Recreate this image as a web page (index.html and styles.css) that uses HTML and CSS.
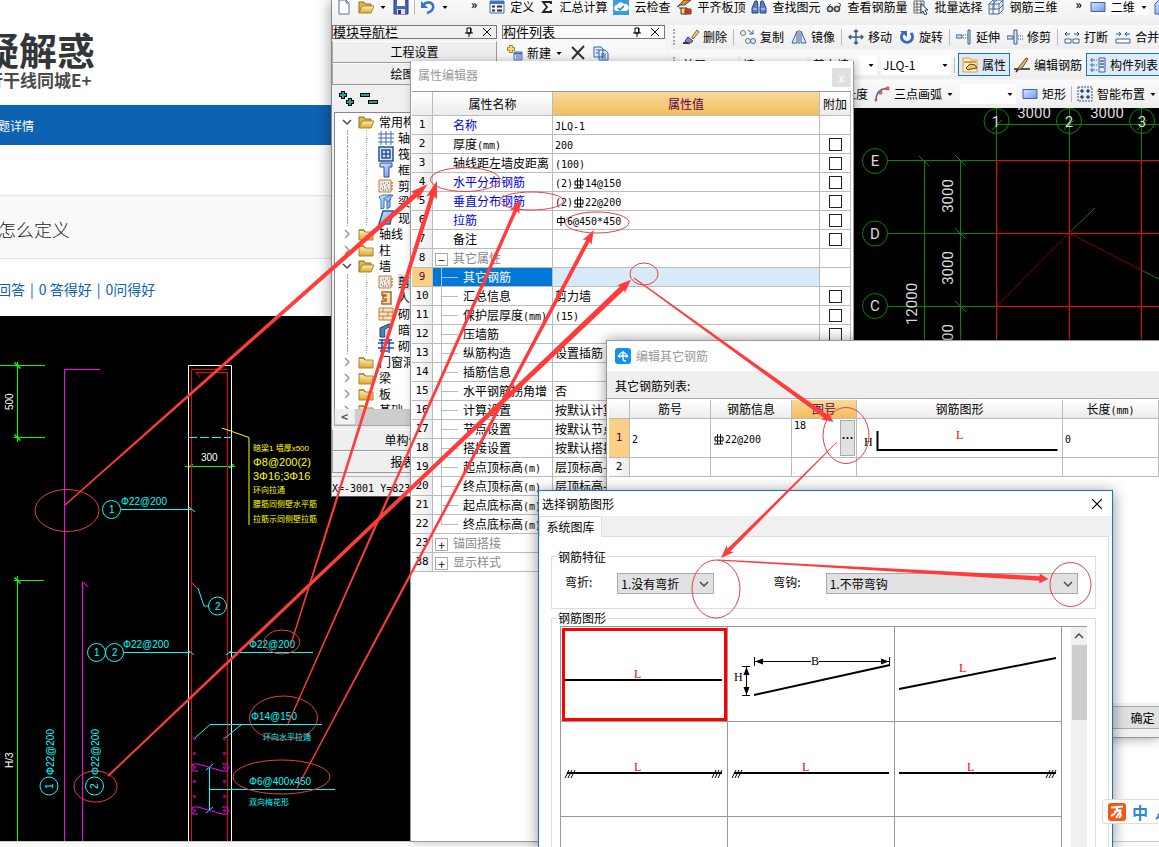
FILE: index.html
```html
<!DOCTYPE html>
<html lang="zh-CN">
<head>
<meta charset="utf-8">
<title>答疑解惑</title>
<link rel="stylesheet" href="styles.css">
</head>
<body>
<svg class="defs" aria-hidden="true">
  <defs>
    <linearGradient id="gold" x1="0" y1="0" x2="0" y2="1"><stop offset="0" stop-color="#fff3b8"/><stop offset="1" stop-color="#dba62b"/></linearGradient>
    <linearGradient id="blue" x1="0" y1="0" x2="1" y2="1"><stop offset="0" stop-color="#d6e6ff"/><stop offset="1" stop-color="#6f97ee"/></linearGradient>
    <symbol id="folder" viewBox="0 0 16 16"><path d="M1 4h5l1 2h8v8H1z" fill="url(#gold)" stroke="#a98632"/><path d="M1 4h5l1 2" fill="none" stroke="#8d6c1c"/></symbol>
    <symbol id="folder-open" viewBox="0 0 16 16"><path d="M1 3h5l1 2h6v3H4l-3 6z" fill="#e3b74a" stroke="#8d6c1c"/><path d="M4 7h12l-3 7H1z" fill="url(#gold)" stroke="#a98632"/></symbol>
    <symbol id="rect" viewBox="0 0 16 16"><path d="M1 3.500h14v9H1z" fill="url(#blue)" stroke="#3f63a8"/></symbol>
    <symbol id="down" viewBox="0 0 8 8"><path d="M1.500 3h5L4 6z" fill="#000"/></symbol>
    <symbol id="wall" viewBox="0 0 16 16"><path d="M1 2h12v12H1z" fill="#e9e5df" stroke="#c77b38"/><path d="M3 11h1M5 9h1M7 12h1M9 10h1M4 6h1M8 7h1M10 12h1M6 5h1M10 5h1M5 12h1" stroke="#555"/><path d="M13 5h2M13 8h2M13 11h2" stroke="#c77b38" stroke-width="1.500"/></symbol>
    <symbol id="chev" viewBox="0 0 10 10"><path d="M1 3l4 4 4-4" fill="none" stroke="#444" stroke-width="1.400"/></symbol>
    <symbol id="chev-r" viewBox="0 0 10 10"><path d="M3 1l4 4-4 4" fill="none" stroke="#999" stroke-width="1.500"/></symbol>
    <symbol id="pin" viewBox="0 0 10 10"><path d="M3 1h4v5H3zM1 6h8M5 6v4" fill="none" stroke="#000"/><path d="M6.500 1v5" stroke="#000"/></symbol>
    <symbol id="close" viewBox="0 0 10 10"><path d="M1 1l8 8M9 1L1 9" fill="none" stroke="#000"/></symbol>
  </defs>
</svg>

<main class="site">
  <header class="site-head">
    <h1 class="logo">疑解惑</h1>
    <p class="tagline">行干线同城E+</p>
  </header>
  <nav class="site-nav"><a href="#q">问题详情</a></nav>
  <section class="site-title"><h2>怎么定义</h2></section>
  <p class="stats"><a href="#a">回答</a><span>|</span><a href="#a">0 答得好</a><span>|</span><a href="#a">0问得好</a></p>
  <div class="cad">
    <svg width="411" height="525" viewBox="0 316 411 525" fill="none">
      <g stroke="#00ff00">
        <path d="M0 365.500h45M17.500 362v80M14 437.500h31M14 580.500h30M17.500 576v265M185 466.500h50"/>
        <path d="M14.500 362.500l6 6M14.500 434.500l6 6M14.500 577.500l6 6M188 468l5-4M229 468l5-4" stroke-width="1.500"/>
      </g>
      <path d="M64.500 841V369.500H100M82.500 841V582l6 5" stroke="#ff00ff"/>
      <path d="M188.500 841V365.500H231.500V841" stroke="#fff"/>
      <path d="M191.500 841V369.500H227M227.500 841V372.500H196l4 5" stroke="#ff0000"/>
      <path d="M188 437.500h44" stroke="#00ffff" stroke-dasharray="9 3"/>
      <path d="M222 428l27 9.500V525" stroke="#ffff00"/>
      <g stroke="#00ffff">
        <circle cx="111.500" cy="509.500" r="9"/><path d="M121 509.500h70M189 507l6 5"/>
        <circle cx="96.500" cy="652.500" r="9"/><circle cx="114.500" cy="652.500" r="9"/><path d="M124 652.500h66M188 650l6 5"/>
        <circle cx="217.500" cy="606" r="9"/><path d="M198 588l6 18h4"/>
        <path d="M229 652.500h84M226 655l6-5M195 738l15-13.500h112M225 738l16-13M210 789.500h125M209.500 767v44M206 770l7-6M206 813l7-6"/>
        <circle cx="49" cy="786" r="9"/><circle cx="94.500" cy="786" r="9"/>
      </g>
      <path d="M191 582l7 7" stroke="#ff00ff"/>
      <g stroke="#ff00ff">
        <circle cx="194.500" cy="738.500" r="1"/><circle cx="194.500" cy="753.500" r="1"/><circle cx="194.500" cy="767.500" r="1"/><circle cx="194.500" cy="781.500" r="1"/><circle cx="194.500" cy="796.500" r="1"/><circle cx="194.500" cy="810.500" r="1"/>
        <circle cx="224.500" cy="738.500" r="1"/><circle cx="224.500" cy="753.500" r="1"/><circle cx="224.500" cy="767.500" r="1"/><circle cx="224.500" cy="781.500" r="1"/><circle cx="224.500" cy="796.500" r="1"/><circle cx="224.500" cy="810.500" r="1"/>
        <path d="M198 771h-5q-3-3 0-7h5l24 7h5q3-3 0-7h-5M198 814h-5q-3-3 0-7h5l24 7h5q3-3 0-7h-5"/>
      </g>
      <g class="cad-white"><text class="num" x="201" y="461">300</text><text class="num" transform="translate(13 410) rotate(-90)">500</text><text class="num" transform="translate(13 768) rotate(-90)">H/3</text></g>
      <g class="cad-yellow">
        <text x="253" y="451">暗梁1 墙厚x500</text><text class="big" x="253" y="466">Φ8@200(2)</text><text class="big" x="253" y="480">3Φ16;3Φ16</text>
        <text x="253" y="493">环向拉通</text><text x="253" y="507">腰筋同侧壁水平筋</text><text x="253" y="522">拉筋示同侧壁拉筋</text>
      </g>
      <g class="cad-cyan">
        <text class="num" x="121" y="505">Φ22@200</text><text class="num" x="123" y="648">Φ22@200</text><text class="num" x="249" y="648">Φ22@200</text><text class="num" x="251" y="720">Φ14@150</text><text class="num" x="249" y="785">Φ6@400x450</text>
        <text x="263" y="740">环向水平拉通</text><text x="249" y="805">双向梅花形</text>
        <text class="num" transform="translate(54 775) rotate(-90)">Φ22@200</text><text class="num" transform="translate(99 775) rotate(-90)">Φ22@200</text>
        <text class="num" x="109" y="513">1</text><text class="num" x="94" y="656">1</text><text class="num" x="112" y="656">2</text><text class="num" x="215" y="610">2</text>
        <text class="num" transform="translate(53 789) rotate(-90)">1</text><text class="num" transform="translate(98 789) rotate(-90)">2</text>
      </g>
    </svg>
  </div>
</main>

<section class="app" aria-label="主程序">
  <div class="bar bar-top">
    <button class="tool" aria-label="新建文件"><svg class="ic" viewBox="0 0 16 16"><path d="M3 1h7l3 3v11H3z" fill="#fff" stroke="#5b6f96"/><path d="M10 1v3h3" fill="none" stroke="#5b6f96"/></svg></button>
    <button class="tool" aria-label="打开"><svg class="ic"><use href="#folder-open"/></svg><svg class="dn"><use href="#down"/></svg></button>
    <button class="tool" aria-label="保存"><svg class="ic" viewBox="0 0 16 16"><path d="M1 1h14v14H1z" fill="#4965bd" stroke="#293a80"/><path d="M4 1h8v6H4z" fill="#fff"/><path d="M4 10h8v5H4z" fill="#d8e1fa"/><path d="M5 11h3v4H5z" fill="#293a80"/></svg></button>
    <span class="sep"></span>
    <button class="tool" aria-label="撤销"><svg class="ic" viewBox="0 0 16 16"><path d="M3 6c5-5 11-2 10 3-.500 3-3 4-6 5" fill="none" stroke="#3973cc" stroke-width="2.500"/><path d="M1 2v7h7z" fill="#3973cc"/></svg><svg class="dn"><use href="#down"/></svg></button>
    <span class="more more-wide">»</span>
    <button class="tool"><svg class="ic" viewBox="0 0 16 16"><path d="M1 2h14v12H1z" fill="#eef3fb" stroke="#4571b5"/><path d="M1 3.500h14" stroke="#4571b5" stroke-width="3"/><path d="M3 7.500h3M3 11.500h3M8 7.500h5M8 11.500h5" stroke="#333" stroke-width="2"/></svg>定义</button>
    <button class="tool"><svg class="ic ic-narrow" viewBox="0 0 14 16"><path d="M11 5V3H3l4 5-4 5h8v-2" fill="none" stroke="#222" stroke-width="1.800"/></svg>汇总计算</button>
    <button class="tool"><svg class="ic" viewBox="0 0 16 16"><path d="M0 0h16v16H0z" fill="#3b9be0"/><path d="M4 12a3 3 0 010-6 4 4 0 017-1 3.500 3.500 0 012 7z" fill="#fff"/><path d="M5 9l2 2 4-4" fill="none" stroke="#267ac0" stroke-width="1.500"/></svg>云检查</button>
    <button class="tool"><svg class="ic" viewBox="0 0 16 16"><path d="M1 8l7-7h7L9 6H5z" fill="#c98e3d" stroke="#764713"/><path d="M3 9h8v6H5V9" fill="#ffd36b" stroke="#333"/><path d="M9 10h6v5H9zM9 12.500h6M12 10v5" fill="#d65a35" stroke="#8b2f16"/></svg>平齐板顶</button>
    <button class="tool"><svg class="ic" viewBox="0 0 16 16"><path d="M4 2h2l1 5v7H1V9zM10 2h2l3 7v5H9V7z" fill="#5a7fc2" stroke="#26447e"/><path d="M7 7h2M2 10h4M10 10h4" stroke="#dce8ff"/></svg>查找图元</button>
    <button class="tool"><svg class="ic" viewBox="0 0 16 16"><circle cx="4" cy="10" r="2.500" fill="#ddd" stroke="#444" stroke-width="1.500"/><circle cx="11" cy="10" r="2.500" fill="#ddd" stroke="#444" stroke-width="1.500"/><path d="M1 9l4-4M13.500 9l1-4-2-1M6 10h3" fill="none" stroke="#444"/></svg>查看钢筋量</button>
    <button class="tool"><svg class="ic" viewBox="0 0 16 16"><path d="M1 2h10v12H1zM1 5h10M1 8h10M1 11h10M4 2v12M8 2v12" fill="#fff" stroke="#666"/><path d="M8 5v9l2-2 2 4 2-1-2-4h3z" fill="#fff" stroke="#234878"/></svg>批量选择</button>
    <button class="tool"><svg class="ic" viewBox="0 0 16 16"><path d="M1 5l4-4h10v10l-4 4H1zM1 5h10v10M11 5l4-4M6 1v10M1 10h10l4-4M5 15V5l4-4" fill="none" stroke="#416aa5"/></svg>钢筋三维</button>
    <span class="more">»</span>
    <button class="tool tool-white"><svg class="ic"><use href="#rect"/></svg>二维<svg class="dn"><use href="#down"/></svg></button>
    <button class="tool" aria-label="视图"><svg class="ic" viewBox="0 0 16 16"><path d="M1 5l4-4h10v10l-4 4H1z" fill="url(#blue)" stroke="#416aa5"/></svg></button>
  </div>

  <div class="app-body">
    <aside class="nav-panel">
      <div class="panel-head"><span>模块导航栏</span><svg class="mini"><use href="#pin"/></svg><svg class="mini"><use href="#close"/></svg></div>
      <button class="nav-btn">工程设置</button>
      <button class="nav-btn">绘图输入</button>
      <div class="tree-tools">
        <svg width="40" height="16" viewBox="0 0 40 16"><path d="M5 0v8M1 4h8M12 7v8M8 11h8M22 4h10M30 11h10" fill="none" stroke="#000" stroke-width="4"/><path d="M5 1v6M2 4h6M12 8v6M9 11h6M23 4h8M31 11h8" fill="none" stroke="#20a39a" stroke-width="2"/></svg>
      </div>
      <ul class="tree">
        <li class="t1"><svg class="chev"><use href="#chev"/></svg><svg class="ic"><use href="#folder-open"/></svg>常用构件类型</li>
        <li class="t2"><svg class="ic" viewBox="0 0 16 16"><path d="M3 1v14M8 1v14M13 1v14M0 4h16M0 8h16M0 12h16" stroke="#3869b3" fill="none"/></svg>轴网</li>
        <li class="t2"><svg class="ic" viewBox="0 0 16 16"><path d="M1 1h14v14H1zM4 4h8v8H4zM8 4v8M4 8h8" fill="#d7e5fa" stroke="#264f95" stroke-width="1.500"/></svg>筏板基础</li>
        <li class="t2"><svg class="ic" viewBox="0 0 16 16"><path d="M2 1h12v4h-3v10H6V5H2z" fill="url(#blue)" stroke="#264f95"/></svg>框柱</li>
        <li class="t2"><svg class="ic"><use href="#wall"/></svg>剪力墙</li>
        <li class="t2"><svg class="ic" viewBox="0 0 16 16"><path d="M1 3l4-2h10l-3 4v8l-3 2V6H6v8l-3 1V6z" fill="url(#blue)" stroke="#3674ae"/><path d="M5 5l8-4M9 9l4-4" stroke="#3674ae"/></svg>梁</li>
        <li class="t2"><svg class="ic" viewBox="0 0 16 16"><path d="M5 1h10l-3 13H1z" fill="url(#blue)" stroke="#1e5da8" stroke-width="1.500"/></svg>现浇板</li>
        <li class="t1"><svg class="chev"><use href="#chev-r"/></svg><svg class="ic"><use href="#folder"/></svg>轴线</li>
        <li class="t1"><svg class="chev"><use href="#chev-r"/></svg><svg class="ic"><use href="#folder"/></svg>柱</li>
        <li class="t1"><svg class="chev"><use href="#chev"/></svg><svg class="ic"><use href="#folder-open"/></svg>墙</li>
        <li class="t2 picked"><svg class="ic"><use href="#wall"/></svg><span>剪力墙</span></li>
        <li class="t2"><svg class="ic" viewBox="0 0 16 16"><path d="M4 2h9v12H4v-3h4V9H5V6h3V5H4z" fill="#f7dfb8" stroke="#b46424" stroke-width="1.500"/></svg>人防门框墙</li>
        <li class="t2"><svg class="ic" viewBox="0 0 16 16"><path d="M1 2h14v12H1zM1 6h14M1 10h14M5 2v4M10 6v4M5 10v4" fill="#f9e4c8" stroke="#c77b38"/></svg>砌体墙</li>
        <li class="t2"><svg class="ic" viewBox="0 0 16 16"><path d="M2 6l9-4 4 1-8 4v8H2z" fill="#4e7fbc" stroke="#173e73"/><path d="M7 8l6-2v7l-6 2z" fill="#c9daf2"/></svg>暗梁</li>
        <li class="t2"><svg class="ic" viewBox="0 0 16 16"><path d="M0 5h16M0 10h16M4 1v14M11 1v14M1 2h13M2 13h8M7 5v5" fill="none" stroke="#2445a8" stroke-width="1.500"/></svg>砌体加筋</li>
        <li class="t1"><svg class="chev"><use href="#chev-r"/></svg><svg class="ic"><use href="#folder"/></svg>门窗洞</li>
        <li class="t1"><svg class="chev"><use href="#chev-r"/></svg><svg class="ic"><use href="#folder"/></svg>梁</li>
        <li class="t1"><svg class="chev"><use href="#chev-r"/></svg><svg class="ic"><use href="#folder"/></svg>板</li>
        <li class="t1"><svg class="chev"><use href="#chev-r"/></svg><svg class="ic"><use href="#folder"/></svg>基础</li>
      </ul>
      <div class="h-scroll"><span>&lt;</span></div>
      <button class="nav-btn">单构件输入</button>
      <button class="nav-btn">报表预览</button>
    </aside>

    <aside class="list-panel">
      <div class="panel-head"><span>构件列表</span><svg class="mini"><use href="#pin"/></svg><svg class="mini"><use href="#close"/></svg></div>
      <div class="list-tools">
        <button class="tool"><svg class="ic" viewBox="0 0 16 16"><path d="M7 7h8v8H7z" fill="#dce9fb" stroke="#426eae"/><path d="M7 8.500h8" stroke="#426eae" stroke-width="2"/><path d="M9 11h5M9 13h5" stroke="#426eae"/><path d="M4 0v8M0 4h8" stroke="#9d7818" stroke-width="3.500"/><path d="M4 1v6M1 4h6" stroke="#ffe05b" stroke-width="2"/></svg>新建<svg class="dn"><use href="#down"/></svg></button>
        <button class="tool" aria-label="删除"><svg class="ic" viewBox="0 0 16 16"><path d="M2 2l12 12M14 1L2 14" stroke="#333" stroke-width="2"/></svg></button>
        <button class="tool" aria-label="复制"><svg class="ic" viewBox="0 0 16 16"><path d="M1 2h7l2 2v8H1zM6 5h6l3 3v7H6z" fill="#e4efff" stroke="#2a62b8"/><path d="M3 5h3M3 8h3M8 9h5M8 11h5M8 13h5" stroke="#2a62b8"/></svg></button>
      </div>
    </aside>

    <div class="work">
      <div class="bar bar-edit">
        <span class="grip"></span>
        <button class="tool"><svg class="ic" viewBox="0 0 16 16"><path d="M9 8l5-7 2 2-6 7z" fill="#f0d487" stroke="#80602a"/><path d="M5 8l5 4-4 3-4-3z" fill="#7099d6" stroke="#243e74"/><path d="M0 14h6" stroke="#333" stroke-width="2"/><path d="M5 12l2 1" stroke="#e8448a" stroke-width="2"/></svg>删除</button>
        <span class="sep"></span>
        <button class="tool"><svg class="ic" viewBox="0 0 16 16"><circle cx="3" cy="4" r="2.500" fill="#eee" stroke="#777"/><circle cx="8" cy="12" r="2.500" fill="#eee" stroke="#777"/><circle cx="13" cy="12" r="2.500" fill="#dce9fb" stroke="#3a68ad"/><path d="M8 1l5 4M13 1v4H9" fill="none" stroke="#3a68ad"/></svg>复制</button>
        <button class="tool"><svg class="ic" viewBox="0 0 16 16"><path d="M6 2v12H1zM10 2v12h5z" fill="#e3ecfa" stroke="#2d5eaa"/><path d="M8 1v14" stroke="#555"/></svg>镜像</button>
        <span class="sep"></span>
        <button class="tool"><svg class="ic" viewBox="0 0 16 16"><path d="M8 1v14M1 8h14M6 3l2-2 2 2M6 13l2 2 2-2M3 6L1 8l2 2M13 6l2 2-2 2" fill="none" stroke="#3c6086" stroke-width="1.500"/></svg>移动</button>
        <button class="tool"><svg class="ic" viewBox="0 0 16 16"><path d="M4 4a5.500 5.500 0 108 0" fill="none" stroke="#3869c7" stroke-width="3"/><path d="M1 2h7v6z" fill="#3869c7"/></svg>旋转</button>
        <span class="sep"></span>
        <button class="tool"><svg class="ic" viewBox="0 0 16 16"><path d="M0 6h6v3H0zM12 1h2v14h-2z" fill="#dce9fb" stroke="#2d5c92"/><path d="M7 6h5M7 9h5" stroke="#2d5c92" stroke-dasharray="1 1"/></svg>延伸</button>
        <button class="tool"><svg class="ic" viewBox="0 0 16 16"><path d="M0 7h6v3H0zM7 1h3v14H7z" fill="#dce9fb" stroke="#2d5c92"/><path d="M11 7h5M11 10h5" stroke="#2d5c92" stroke-dasharray="1 1"/></svg>修剪</button>
        <span class="sep"></span>
        <button class="tool"><svg class="ic" viewBox="0 0 16 16"><path d="M1 10h6v4H1zM9 10h6v4H9z" fill="#fff" stroke="#3d6294"/><path d="M1 5h5M3 3L1 5l2 2M15 5h-5M13 3l2 2-2 2" fill="none" stroke="#1b56b8"/></svg>打断</button>
        <button class="tool"><svg class="ic" viewBox="0 0 16 16"><path d="M1 10h14v4H1z" fill="#fff" stroke="#3d6294"/><path d="M1 5h5M4 3l2 2-2 2M15 5h-5M12 3l-2 2 2 2" fill="none" stroke="#1b56b8"/></svg>合并</button>
      </div>
      <div class="bar bar-pick">
        <span class="grip"></span>
        <label class="combo w-57"><select aria-label="楼层"><option>首层</option></select><svg class="dn"><use href="#down"/></svg></label>
        <label class="combo w-66"><select aria-label="类型"><option>墙</option></select><svg class="dn"><use href="#down"/></svg></label>
        <label class="combo w-66"><select aria-label="构件类型"><option>剪力墙</option></select><svg class="dn"><use href="#down"/></svg></label>
        <label class="combo w-70"><select aria-label="构件"><option>JLQ-1</option></select><svg class="dn"><use href="#down"/></svg></label>
        <span class="sep"></span>
        <button class="tool active"><svg class="ic" viewBox="0 0 16 16"><path d="M1 1h7l1 2h6v12H1z" fill="#fff2cf" stroke="#e79933"/><path d="M2 5h12" stroke="#e79933" stroke-width="2"/><path d="M4 11l4-4 5 1 2 3-6 1-3 1z" fill="#f5c469" stroke="#544020"/></svg>属性</button>
        <button class="tool"><svg class="ic" viewBox="0 0 16 16"><path d="M0 12h16M2 15l4-5" stroke="#222" stroke-width="1.500"/><path d="M5 10l7-9 2 1-6 9-4 2z" fill="#e6bd76" stroke="#684720"/></svg>编辑钢筋</button>
        <button class="tool active"><svg class="ic" viewBox="0 0 16 16"><path d="M1 2h2v2H1zM1 7h2v2H1zM1 12h2v2H1z" fill="#fff" stroke="#456c9b"/><path d="M4 3h3M4 8h3M4 13h3" stroke="#456c9b" stroke-dasharray="1 1"/><path d="M9 1h6v14H9z" fill="#e4edfb" stroke="#35639d"/><path d="M10 4h4M10 7h4M10 10h4" stroke="#35639d" stroke-width="1.500"/></svg>构件列表</button>
      </div>
      <div class="bar bar-draw">
        <span class="tool">点加长度</span>
        <button class="tool"><svg class="ic" viewBox="0 0 16 16"><path d="M2 14C2 6 7 2 14 3" fill="none" stroke="#376cad" stroke-width="1.500"/><path d="M1 13h2v2H1zM5 5h3v3H5zM12 1h3v3h-3z" fill="#f06a4d" stroke="#b33" stroke-width=".5"/></svg>三点画弧<svg class="dn"><use href="#down"/></svg></button>
        <label class="combo w-56"><select aria-label="绘制方式"><option></option></select><svg class="dn"><use href="#down"/></svg></label>
        <button class="tool"><svg class="ic"><use href="#rect"/></svg>矩形</button>
        <span class="sep"></span>
        <button class="tool"><svg class="ic" viewBox="0 0 16 16"><path d="M1 1h14v14H1z" fill="#e5eefb" stroke="#31577f" stroke-dasharray="2 1"/><path d="M5 3v4M3 5h4M11 3v4M9 5h4M5 9v4M3 11h4M11 9v4M9 11h4" stroke="#111"/></svg>智能布置<svg class="dn"><use href="#down"/></svg></button>
      </div>
      <div class="canvas">
        <svg width="305" height="370" viewBox="854 108 305 370" fill="none">
          <g stroke="#008a00">
            <path d="M997 124.500h162M996.500 108v53M1069.500 108v53M1141.500 108v53M888 160.500h109M888 233.500h109M888 306.500h109M924.500 160v318M960.500 160v318"/>
            <path d="M919 156l10 10M955 155l11 11M955 228l11 11M955 301l11 11M992 130l10-10M1064 130l10-10M1137 130l10-10M1069 233l26-25M1141 270l18 9"/>
            <circle cx="996.500" cy="121" r="12.500"/><circle cx="1069" cy="121" r="12.500"/><circle cx="1142" cy="121" r="12.500"/>
            <circle cx="875" cy="161" r="12.500"/><circle cx="875" cy="233.500" r="12.500"/><circle cx="875" cy="306" r="12.500"/>
          </g>
          <path d="M996.500 160v318M1069.500 160v318M1141.500 160v318M996 160.500h163M996 233.500h163M996 306.500h163" stroke="#ff0000"/>
          <path d="M997 306l72-73 72 37" stroke="#c00000" stroke-dasharray="2 1"/>
          <g class="axis">
            <text x="1034" y="118">3000</text><text x="1107" y="118">3000</text>
            <text x="996" y="127">1</text><text x="1069" y="127">2</text><text x="1142" y="127">3</text>
            <text x="875" y="166">E</text><text x="875" y="239">D</text><text x="875" y="311">C</text>
            <text transform="translate(953 196) rotate(-90)">3000</text><text transform="translate(953 268) rotate(-90)">3000</text><text transform="translate(953 341) rotate(-90)">3000</text>
            <text transform="translate(917 304) rotate(-90)">12000</text>
          </g>
        </svg>
      </div>
    </div>
  </div>
  <div class="status"><span>X=-3001 Y=8231</span></div>
</section>

<section class="win props" aria-label="属性编辑器">
  <header class="win-head"><span>属性编辑器</span><button class="gray-x" aria-label="关闭">x</button></header>
  <table class="grid prop-grid">
    <colgroup><col class="c-num"><col class="c-name"><col><col class="c-add"></colgroup>
    <thead><tr><th></th><th>属性名称</th><th class="hot">属性值</th><th>附加</th></tr></thead>
    <tbody>
      <tr><th>1</th><td class="top link">名称</td><td><span class="lat">JLQ-1</span></td><td></td></tr>
      <tr><th>2</th><td class="top">厚度<span class="lat">(mm)</span></td><td><span class="lat">200</span></td><td><input type="checkbox" aria-label="厚度附加"></td></tr>
      <tr><th>3</th><td class="top">轴线距左墙皮距离</td><td><span class="lat">(100)</span></td><td><input type="checkbox" aria-label="距离附加"></td></tr>
      <tr><th>4</th><td class="top link">水平分布钢筋</td><td><span class="lat">(2)</span><svg class="bar-sym" viewBox="0 0 12 12"><path d="M2 4h8v4H2zM4.500 1v10M7.500 1v10M1 11h9" fill="none" stroke="#000"/></svg><span class="lat">14@150</span></td><td><input type="checkbox" aria-label="水平筋附加"></td></tr>
      <tr><th>5</th><td class="top link">垂直分布钢筋</td><td><span class="lat">(2)</span><svg class="bar-sym" viewBox="0 0 12 12"><path d="M2 4h8v4H2zM4.500 1v10M7.500 1v10M1 11h9" fill="none" stroke="#000"/></svg><span class="lat">22@200</span></td><td><input type="checkbox" aria-label="垂直筋附加"></td></tr>
      <tr><th>6</th><td class="top link">拉筋</td><td><svg class="bar-sym" viewBox="0 0 12 12"><path d="M2.500 3.500h7v4h-7zM6 1v10" fill="none" stroke="#000"/></svg><span class="lat">6@450*450</span></td><td><input type="checkbox" aria-label="拉筋附加"></td></tr>
      <tr><th>7</th><td class="top">备注</td><td></td><td><input type="checkbox" aria-label="备注附加"></td></tr>
      <tr><th>8</th><td class="group"><button class="box" aria-label="收起">−</button>其它属性</td><td></td><td></td></tr>
      <tr class="current"><th>9</th><td class="sub">其它钢筋</td><td></td><td></td></tr>
      <tr><th>10</th><td class="sub">汇总信息</td><td>剪力墙</td><td><input type="checkbox" aria-label="汇总附加"></td></tr>
      <tr><th>11</th><td class="sub">保护层厚度<span class="lat">(mm)</span></td><td><span class="lat">(15)</span></td><td><input type="checkbox" aria-label="保护层附加"></td></tr>
      <tr><th>12</th><td class="sub">压墙筋</td><td></td><td><input type="checkbox" aria-label="压墙筋附加"></td></tr>
      <tr><th>13</th><td class="sub">纵筋构造</td><td>设置插筋</td><td></td></tr>
      <tr><th>14</th><td class="sub">插筋信息</td><td></td><td></td></tr>
      <tr><th>15</th><td class="sub">水平钢筋拐角增</td><td>否</td><td></td></tr>
      <tr><th>16</th><td class="sub">计算设置</td><td>按默认计算设置</td><td></td></tr>
      <tr><th>17</th><td class="sub">节点设置</td><td>按默认节点设置</td><td></td></tr>
      <tr><th>18</th><td class="sub">搭接设置</td><td>按默认搭接设置</td><td></td></tr>
      <tr><th>19</th><td class="sub">起点顶标高<span class="lat">(m)</span></td><td>层顶标高-</td><td></td></tr>
      <tr><th>20</th><td class="sub">终点顶标高<span class="lat">(m)</span></td><td>层顶标高-</td><td></td></tr>
      <tr><th>21</th><td class="sub">起点底标高<span class="lat">(m)</span></td><td>层底标高</td><td></td></tr>
      <tr><th>22</th><td class="sub last">终点底标高<span class="lat">(m)</span></td><td>层底标高</td><td></td></tr>
      <tr><th>23</th><td class="group"><button class="box" aria-label="展开">+</button>锚固搭接</td><td></td><td></td></tr>
      <tr><th>38</th><td class="group"><button class="box" aria-label="展开">+</button>显示样式</td><td></td><td></td></tr>
    </tbody>
  </table>
</section>

<section class="win rebar" aria-label="编辑其它钢筋">
  <header class="win-head"><svg class="ic" viewBox="0 0 16 16"><rect width="16" height="16" rx="3" fill="#1590ee"/><path d="M8 3v8q0 2 3 2M5 6q3-3 6 0M3 8h10M3 8l2-1.500M3 8l2 1.500M13 8l-2-1.500M13 8l-2 1.500" fill="none" stroke="#fff" stroke-width="1.300"/></svg><span>编辑其它钢筋</span></header>
  <p class="caption">其它钢筋列表:</p>
  <table class="grid rebar-grid">
    <colgroup><col class="c-num"><col class="c-81"><col class="c-81"><col class="c-65"><col class="c-206"><col></colgroup>
    <thead><tr><th></th><th>筋号</th><th>钢筋信息</th><th class="hot">图号</th><th>钢筋图形</th><th>长度<span class="lat">(mm)</span></th></tr></thead>
    <tbody>
      <tr class="tall"><th class="on">1</th><td><span class="lat">2</span></td><td><svg class="bar-sym" viewBox="0 0 12 12"><path d="M2 4h8v4H2zM4.500 1v10M7.500 1v10M1 11h9" fill="none" stroke="#000"/></svg><span class="lat">22@200</span></td><td><div class="pick"><span class="lat">18</span><button aria-label="选择图形">…</button></div></td><td><svg class="shape-row" width="202" height="36" viewBox="860 420 202 36"><path d="M878.500 431v19h180" fill="none" stroke="#000" stroke-width="2"/><text x="865" y="446">H</text><text class="red" x="957" y="439">L</text></svg></td><td><span class="lat">0</span></td></tr>
      <tr><th>2</th><td></td><td></td><td></td><td></td><td></td></tr>
    </tbody>
  </table>
  <footer><button>确定</button></footer>
</section>

<section class="win chooser" aria-label="选择钢筋图形">
  <header class="win-head"><span>选择钢筋图形</span><button class="x" aria-label="关闭"><svg width="12" height="12" viewBox="0 0 10 10"><use href="#close"/></svg></button></header>
  <div class="tabs"><button class="tab">系统图库</button></div>
  <div class="tab-page">
    <fieldset class="features">
      <legend>钢筋特征</legend>
      <label for="bend">弯折:</label>
      <div class="drop drop-bend"><select id="bend"><option>1.没有弯折</option></select><svg class="chev"><use href="#chev"/></svg></div>
      <label for="hook">弯钩:</label>
      <div class="drop drop-hook"><select id="hook"><option>1.不带弯钩</option></select><svg class="chev"><use href="#chev"/></svg></div>
    </fieldset>
    <fieldset class="shapes">
      <legend>钢筋图形</legend>
      <div class="gallery">
        <div class="cells">
          <button class="cell selected"><svg viewBox="0 0 166 94"><path d="M4 53h157" stroke="#000" stroke-width="2"/><text class="red" x="73" y="51">L</text></svg></button>
          <button class="cell"><svg viewBox="0 0 166 94"><path d="M26 68l136-30" stroke="#000" stroke-width="2"/><path d="M26.500 30v9M161.500 30v9M27 34.500h56M91 34.500h71M18.500 39v29M14 39.500h8M14 68.500h8" stroke="#000"/><path d="M27 34.500l8-3v6zM161 34.500l-8-3v6zM18.500 40l-3 8h6zM18.500 68l-3-8h6z" fill="#000"/><text x="83" y="38">B</text><text x="6" y="54">H</text></svg></button>
          <button class="cell"><svg viewBox="0 0 166 94"><path d="M4 62l157-31" stroke="#000" stroke-width="2"/><text class="red" x="64" y="45">L</text></svg></button>
          <button class="cell"><svg viewBox="0 0 166 94"><path d="M6 51h155" stroke="#000" stroke-width="2"/><path d="M4 56l4-8M7 56l4-8M10 56l4-8M151 56l4-8M154 56l4-8M157 56l4-8" stroke="#000"/><text class="red" x="73" y="49">L</text></svg></button>
          <button class="cell"><svg viewBox="0 0 166 94"><path d="M6 51h155" stroke="#000" stroke-width="2"/><path d="M4 56l4-8M7 56l4-8M10 56l4-8" stroke="#000"/><text class="red" x="74" y="49">L</text></svg></button>
          <button class="cell"><svg viewBox="0 0 166 94"><path d="M4 51h157" stroke="#000" stroke-width="2"/><path d="M151 56l4-8M154 56l4-8M157 56l4-8" stroke="#000"/><text class="red" x="72" y="49">L</text></svg></button>
          <button class="cell" aria-label="图形7"></button><button class="cell" aria-label="图形8"></button><button class="cell" aria-label="图形9"></button>
        </div>
        <div class="v-scroll"><svg class="chev up"><use href="#chev"/></svg><span class="thumb"></span></div>
      </div>
    </fieldset>
  </div>
</section>

<div class="ime"><svg width="18" height="20" viewBox="0 0 18 20"><rect y="1" width="18" height="18" rx="3" fill="#fa5514"/><path d="M3 5.500l12-1M9 6c0 4-2 6-6 8M6 10l6-2c1 0 1 1 0 2l-4 6M12 11c2 2 0 4-1 5" fill="none" stroke="#fff" stroke-width="2"/></svg><span>中</span><svg width="6" height="20" viewBox="0 0 6 20"><path d="M4 12q2 2-2 5" fill="none" stroke="#2b87dc" stroke-width="2"/></svg></div>

<svg class="marks" width="1159" height="847" viewBox="0 0 1159 847" aria-hidden="true">
  <g class="rings">
    <ellipse cx="67" cy="510.500" rx="32" ry="21"/><ellipse cx="95.500" cy="786.500" rx="21.500" ry="15.500"/><ellipse cx="282" cy="642" rx="18" ry="12"/>
    <ellipse cx="283.500" cy="718" rx="34" ry="22"/><ellipse cx="281.500" cy="777" rx="48.500" ry="17"/>
    <ellipse cx="465" cy="179.500" rx="34.500" ry="12"/><ellipse cx="531.500" cy="201" rx="32" ry="9"/><ellipse cx="597" cy="222.500" rx="32" ry="10.500"/>
    <ellipse cx="644" cy="274" rx="14" ry="11"/><ellipse cx="846" cy="435.500" rx="23" ry="28"/><ellipse cx="716" cy="589" rx="24" ry="29"/><ellipse cx="1070.500" cy="584.500" rx="20.500" ry="22"/>
  </g>
  <g class="arrows">
    <path transform="translate(65 505) rotate(-41.500)" d="M0-.8L468-2.500 466-5.500 484 0 466 5.500 468 2.500 0 .8z"/>
    <path transform="translate(290 647) rotate(-72.500)" d="M0-.6L473-2.200 471-5.500 489 0 471 5.500 473 2.200 0 .6z"/>
    <path transform="translate(287 726) rotate(-66.100)" d="M0-.6L564-1.800 562-5 576 0 562 5 564 1.800 0 .6z"/>
    <path transform="translate(297 788) rotate(-62)" d="M0-.6L620-2 618-5 632 0 618 5 620 2 0 .6z"/>
    <path transform="translate(108 776) rotate(-43.500)" d="M0-.9L709-2.800 707-5.500 721 0 707 5.500 709 2.800 0 .9z"/>
    <path transform="translate(634 278) rotate(35.800)" d="M0-.5L236-2.300 234-5.500 246 0 234 5.500 236 2.300 0 .5z"/>
    <path transform="translate(837 442) rotate(135)" d="M0-.3L153-2 151-5 164 0 151 5 153 2 0 .3z"/>
    <path transform="translate(718 560) rotate(3.300)" d="M0-.6L322-2.300 322-5 331 0 322 5 322 2.300 0 .6z"/>
  </g>
</svg>
</body>
</html>
```

FILE: styles.css
```css
* { box-sizing: border-box; }
html, body { height: 100%; }
body {
  margin: 0; position: relative; overflow: hidden; background: #fafafa;
  font: 12px/16px "Noto Sans CJK SC", "Noto Sans", sans-serif; color: #000;
}
button, select, input { font: inherit; color: inherit; margin: 0; padding: 0; border: 0; background: none; border-radius: 0; }
select { appearance: none; min-width: 0; outline: 0; }
p, h1, h2, ul { margin: 0; padding: 0; }
svg { display: block; flex: none; }
.defs { position: absolute; width: 0; height: 0; }
.ic { width: 16px; height: 16px; }
.ic-narrow { width: 14px; }
.dn { width: 8px; height: 8px; }
.mini { width: 10px; height: 10px; }
.chev { width: 10px; height: 10px; }
.lat { font: 10px/12px "DejaVu Sans Mono", monospace; }

/* question page behind the windows */
.site { background: #fff; border-bottom: 1px solid #ccc; }
.site-head { height: 105px; padding-top: 28px; margin-left: -19px; color: #333638; }
.logo { font-size: 38px; line-height: 42px; font-weight: 700; }
.tagline { font-size: 17px; line-height: 20px; font-weight: 700; color: #4a4a4a; margin-left: 5px; }
.site-nav { height: 40px; background: #0e62b2; color: #fff; line-height: 42px; margin-bottom: 50px; }
.site-nav a { color: inherit; text-decoration: none; margin-left: -14px; }
.site-title { height: 64px; background: #f9f9f9; border: solid #e2e2e2; border-width: 1px 0; }
.site-title h2 { font-size: 18px; font-weight: 300; line-height: 66px; margin-left: -2px; color: #222; }
.stats { display: flex; gap: 5px; height: 57px; line-height: 60px; font-size: 14px; font-weight: 400; color: #0e62b2; margin-left: -3px; }
.stats a { color: inherit; text-decoration: none; }
.cad { background: #000; width: fit-content; }
.cad text { font: 8px "Liberation Sans", "Noto Sans CJK SC", sans-serif; }
.cad text.num { font-size: 10px; }
.cad text.big { font-size: 11px; }
.cad-white { fill: #fff; }
.cad-cyan { fill: #00ffff; }
.cad-yellow { fill: #ffff00; }

/* main program */
.app {
  position: absolute; left: 331px; right: 0; top: 0; height: 497px; overflow: hidden;
  display: flex; flex-direction: column; background: #f5f5f5;
  border-left: 1px solid #888; border-bottom: 1px solid #555; box-shadow: 0 0 14px rgba(0, 0, 0, .4);
}
.bar { display: flex; align-items: center; white-space: nowrap; background: linear-gradient(#fafafa, #eee); }
.bar > *, .tool { flex: none; }
.tool { display: flex; align-items: center; gap: 4px; }
.bar-top { height: 25px; padding: 0 0 11px 4px; gap: 6px; }
.bar-top .tool { gap: 5px; }
.tool-white { background: #fff; }
.sep { width: 1px; height: 16px; background: #bbb; margin: 0 -1px; }
.grip { width: 3px; height: 16px; border-left: 2px dotted #aaa; }
.more { font-weight: 700; line-height: 8px; align-self: flex-start; margin: 0 2px 0 12px; }
.more-wide { margin: 0 6px 0 16px; }
.app-body { flex: 1; min-height: 0; display: flex; gap: 5px; }
.nav-panel { width: 165px; display: flex; flex-direction: column; background: #f0f0f0; padding-bottom: 3px; }
.list-panel { width: 163px; background: linear-gradient(#fdfdfd, #f0f0f0 60px); }
.panel-head { height: 14px; border: 1px solid #777; display: flex; align-items: center; gap: 8px; padding-right: 4px; font-size: 13px; line-height: 12px; margin-bottom: 2px; white-space: nowrap; }
.panel-head span { flex: 1; }
.nav-btn { flex: none; height: 22px; border: 1px solid #aaa; border-color: #fff #999 #999 #aaa; background: #efefef; text-align: center; }
.tree-tools { height: 27px; padding: 6px 6px; flex: none; }
.tree { flex: 1; min-height: 0; overflow: hidden; list-style: none; background: #fff; border: 1px solid #888; border-width: 1px 0 0 1px; margin-left: 2px; padding-top: 1px; }
.tree li { height: 16px; display: flex; align-items: center; white-space: nowrap; }
.t1 { padding-left: 7px; gap: 5px; }
.t1 .chev { margin-right: 1px; }
.t2 { padding-left: 43px; gap: 4px; background: radial-gradient(circle, #999 0 1px, transparent 1px) 12px 0 / 1px 3px repeat-y, linear-gradient(90deg, #999 1px, transparent 1px) 32px 8px / 2px 1px no-repeat, linear-gradient(#aaa 1px, transparent 1px) 31px 0 / 1px 2px repeat-y; }
.picked span { background: #dcdcdc; }
.h-scroll { height: 17px; background: #cdcdcd; border: solid #aaa; border-width: 0 0 1px 1px; margin: 0 0 3px 2px; line-height: 15px; flex: none; }
.h-scroll span { display: block; width: 20px; background: #f0f0f0; padding-left: 6px; font-weight: 700; color: #555; }
.list-tools { display: flex; align-items: center; gap: 7px; padding: 4px 5px; }
.work { flex: 1; min-width: 0; display: flex; flex-direction: column; }
.bar-edit { height: 24px; padding-left: 3px; gap: 7px; }
.bar-edit .sep { margin: 0 -1px; }
.bar-pick { height: 29px; margin-top: 1px; padding-left: 3px; gap: 4px; }
.bar-draw { height: 28px; margin-top: 1px; padding-left: 150px; gap: 6px; }
.combo { display: flex; align-items: center; background: #fff; height: 20px; padding-right: 2px; }
.combo select { flex: 1; padding-left: 2px; }
.w-56 { width: 56px; }
.w-57 { width: 57px; }
.w-66 { width: 66px; }
.w-70 { width: 70px; }
.active { height: 23px; padding: 0 3px; background: #dfeaf7; border: 1px solid #1673c4; }
.canvas { flex: 1; min-height: 0; overflow: hidden; background: #000; display: flex; padding-left: 184px; }
.axis text { font: 15px Roboto, "Liberation Sans", sans-serif; fill: #ddd; text-anchor: middle; }
.status { height: 20px; border-top: 1px solid #bbb; line-height: 19px; background: #f0f0f0; }
.status span { font: 10px/12px "DejaVu Sans Mono", monospace; }

/* floating windows */
.win { position: absolute; background: #fff; display: flex; flex-direction: column; }
.win-head { display: flex; align-items: center; flex: none; background: #fff; }
.grid { table-layout: fixed; width: 100%; border-spacing: 0; }
.grid th, .grid td { height: 19px; padding: 0; border: solid #bbb; border-width: 0 1px 1px 0; font-weight: 400; line-height: 16px; white-space: nowrap; overflow: hidden; }
.grid td { padding-left: 2px; }
.grid th { background: linear-gradient(#fff, #ececec); }
.grid tbody th { background: linear-gradient(90deg, #fff, #ececec); font: 11px/18px "DejaVu Sans Mono", monospace; }
.grid thead .hot { background: linear-gradient(#f9d99c, #f2bd5b); color: #5a0050; }
.c-num { width: 21px; }
.c-name { width: 120px; }
.c-add { width: 31px; }
.c-81 { width: 81px; }
.c-65 { width: 65px; }
.c-206 { width: 206px; }
.bar-sym { display: inline-block; width: 12px; height: 12px; vertical-align: -2px; }

.props { left: 410px; top: 61px; width: 444px; height: 781px; border: 1px solid #999; border-top: 0; padding: 0 2px 0 1px; box-shadow: 2px 0 8px rgba(0, 0, 0, .25); }
.props .win-head { height: 31px; border-bottom: 1px solid #999; padding: 0 0 3px 6px; justify-content: space-between; color: #999; }
.gray-x { width: 19px; height: 19px; background: #e0e0e0; color: #fff; line-height: 16px; margin-top: 6px; }
.prop-grid thead th { height: 24px; }
.prop-grid td.top { padding-left: 20px; }
.prop-grid td.link { color: #0000e0; }
.prop-grid td.sub { padding-left: 30px; background: linear-gradient(#bbb, #bbb) 8px 0 / 1px 100% no-repeat, linear-gradient(#bbb, #bbb) 8px 9px / 17px 1px no-repeat; }
.prop-grid td.last { background-size: 1px 9px, 17px 1px; }
.prop-grid td.group { color: #888; }
.prop-grid td:last-child { text-align: center; padding: 0; }
.box { width: 13px; height: 13px; border: 1px solid #aaa; background: #fff; color: #000; line-height: 10px; margin-right: 5px; vertical-align: middle; }
.prop-grid input { appearance: none; display: block; width: 13px; height: 13px; border: 1px solid #222; background: #fff; margin: 0 auto; }
.prop-grid .current th, .grid tbody .on { background: #fccf84; color: #5a0050; }
.prop-grid .current td.sub { background-color: #0078d7; color: #fff; }
.prop-grid .current td:nth-child(3) { background: #d8e9f8; }

.rebar { left: 606px; top: 340px; right: 0; height: 398px; border: solid #999; border-width: 1px 0 1px 1px; box-shadow: 0 0 12px rgba(0, 0, 0, .4); }
.rebar .win-head { height: 30px; padding-left: 8px; gap: 5px; color: #999; }
.caption { height: 28px; line-height: 30px; background: #efefef; border-bottom: 1px solid #aaa; padding-left: 8px; }
.rebar-grid { margin: 1px 0 0 2px; width: calc(100% - 2px); }
.rebar-grid .tall td, .rebar-grid .tall th { height: 39px; }
.pick { display: flex; justify-content: space-between; height: 36px; padding-right: 1px; }
.pick button { width: 15px; background: #e1e1e1; border: 1px solid #aaa; font-weight: 700; text-align: center; }
.shape-row text, .cell text { font: 12px "Liberation Serif", serif; }
.shape-row .red, .cell .red { fill: #ff0000; }
.rebar footer { margin-top: auto; background: #f0f0f0; height: 34px; padding-top: 3px; display: flex; justify-content: flex-end; }
.rebar footer button { width: 75px; height: 23px; margin-right: -21px; border: 1px solid #aaa; background: #e1e1e1; }

.chooser { left: 538px; top: 490px; width: 575px; bottom: 0; border: 1px solid #1673c4; border-bottom: 0; padding-right: 3px; box-shadow: 0 2px 14px rgba(0, 0, 0, .45); overflow: hidden; }
.chooser .win-head { height: 25px; padding: 0 6px 0 3px; justify-content: space-between; }
.tabs { height: 20px; margin-right: -3px; background: #f0f0f0; flex: none; }
.tab { width: 63px; height: 21px; background: #fff; border: 1px solid #ddd; border-bottom: 0; position: relative; }
.tab-page { flex: 1; border: solid #ddd; border-width: 1px 1px 0 0; padding: 11px 12px 0; }
fieldset { margin: 0; padding: 0; border: 1px solid #ddd; min-width: 0; }
legend { padding: 0 1px; height: 16px; }
.features { height: 61px; padding: 9px 17px 0 13px; display: flex; align-items: flex-start; line-height: 18px; }
.features legend { margin-left: -8px; }
.shapes legend { margin-left: -3px; }
.drop { display: flex; align-items: center; height: 21px; background: #e1e1e1; border: 1px solid #aaa; padding-right: 4px; }
.drop select { flex: 1; padding-left: 3px; }
.drop-bend { width: 97px; margin: 0 59px 0 25px; }
.drop-hook { flex: 1; margin-left: 25px; }
.shapes { border-bottom: 0; padding: 0 8px; margin-top: 1px; height: 300px; }
.gallery { display: flex; justify-content: space-between; border-top: 1px solid #999; }
.cells { display: grid; grid-template-columns: repeat(3, 167px); border-left: 1px solid #999; }
.cell { height: 95px; border: solid #999; border-width: 0 1px 1px 0; overflow: hidden; }
.cell svg { width: 100%; height: 94px; }
.cell path { fill: none; }
.cell path[fill] { fill: #000; }
.selected { outline: 3px solid #ff0000; outline-offset: -4px; }
.v-scroll { width: 16px; background: #f0f0f0; display: flex; flex-direction: column; align-items: center; }
.up { transform: rotate(180deg); margin: 4px 0; }
.thumb { width: 15px; height: 75px; background: #cdcdcd; }

.ime { position: absolute; right: 0; top: 799px; width: 57px; height: 25px; display: flex; align-items: center; gap: 6px; padding-left: 5px; background: #fff; border: 1px solid #ddd; border-right: 0; border-radius: 4px 0 0 4px; overflow: hidden; color: #2b87dc; font-size: 16px; font-weight: 700; }
.marks { position: absolute; left: 0; top: 0; pointer-events: none; }
.rings { fill: none; stroke: #e04444; stroke-width: 1; }
.arrows { fill: #ff3b3b; }
```
